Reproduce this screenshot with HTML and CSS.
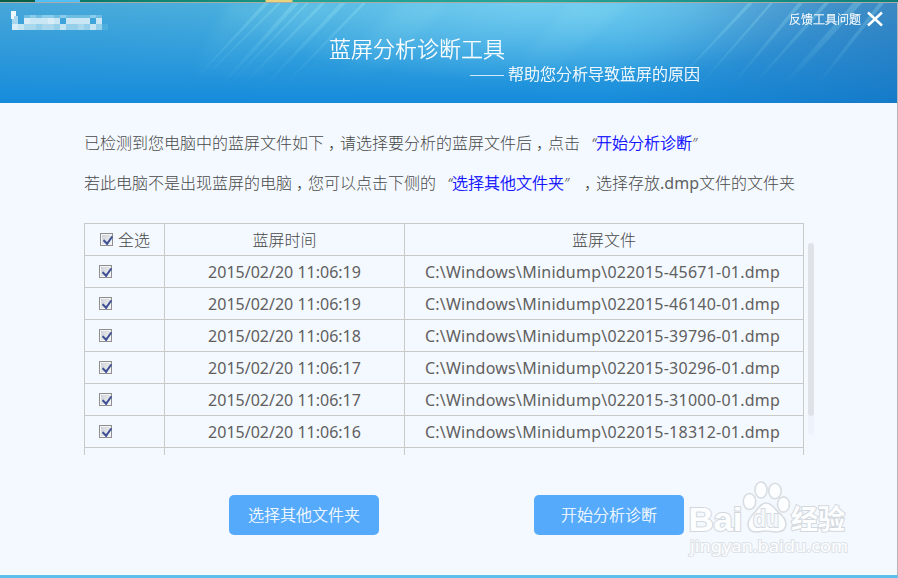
FILE: index.html
```html
<!DOCTYPE html>
<html lang="zh-CN">
<head>
<meta charset="utf-8">
<title>蓝屏分析诊断工具</title>
<link rel="stylesheet" href="styles.css">
</head>
<body>
<div class="desktop-strip"></div>
<div class="window">
  <header class="header">
    <svg class="rays" width="897" height="100" viewBox="0 0 897 100" aria-hidden="true">
      <defs>
        <linearGradient id="fade" x1="0" y1="0" x2="0" y2="1"><stop offset="0" stop-color="#bff" stop-opacity=".3"/><stop offset=".85" stop-color="#bff" stop-opacity="0"/></linearGradient>
        <filter id="soft"><feGaussianBlur stdDeviation="0.7"/></filter>
        <filter id="haze" x="-20%" width="140%"><feGaussianBlur stdDeviation="5"/></filter>
      </defs>
      <g fill="url(#fade)" filter="url(#soft)">
        <path d="M264 0h5L202 70h-2zM278 0h3L214 66h-2zM293 0h6L214 92h-3zM306 0h3L226 86h-2zM321 0h4L238 88h-2zM340 0h6L250 100h-3zM362 0h4L272 96h-2z" opacity=".7"/>
        <path d="M748 0h5L680 76h-2zM770 0h3L705 78h-3zM798 0h5L727 90h-3zM824 0h5L748 90h-3zM853 0h9L774 96h-5zM879 0h5L806 98h-3z" opacity=".75"/>
      </g>
      <g fill="url(#fade)" filter="url(#haze)">
        <path d="M230 0h110L250 90h-70zM400 0h50L350 96h-40zM570 0h60L520 96h-30z" opacity=".35"/>
      </g>
    </svg>
    <div class="topbar">
      <svg class="logo" width="100" height="22" viewBox="0 0 100 22" shape-rendering="crispEdges" aria-hidden="true">
        <path fill="#a9d8ee" d="M4 5h6v14H4z"/>
        <path fill="#eff8fc" d="M3 0h5v5H6v3H3z"/>
        <path fill="#d8edf7" d="M4 13h6v6H4z"/>
        <path fill="#6ebde3" d="M16 4h78v3H16z"/>
        <path fill="#8accea" d="M22 4h6v3h-6zM34 4h12v3H34zM52 4h6v3h-6zM82 4h6v3h-6z"/>
        <path fill="#c8e6f4" d="M16 7h36v6H16zM58 7h24v6H58zM88 7h6v6h-6z"/>
        <path fill="#d8edf7" d="M16 7h6v6h-6zM40 7h6v6h-6z"/>
        <path fill="#a9d8ee" d="M10 13h84v6H10z"/>
        <path fill="#96cfea" d="M28 13h6v6h-6zM46 13h6v6h-6zM58 13h12v6H58zM76 13h6v6h-6zM88 13h6v6h-6z"/>
        <path fill="#c4e5f3" d="M10 13h6v6h-6zM52 13h6v6h-6zM82 13h6v6h-6z"/>
        <path fill="#4eaedd" d="M94 13h6v6h-6z"/>
      </svg>
      <span class="feedback">反馈工具问题</span>
      <svg class="close" width="18" height="16" viewBox="0 0 18 16" aria-hidden="true"><path d="M2 1.5 16 14.5M16 1.5 2 14.5" stroke="#fff" stroke-width="2.5" fill="none"/></svg>
    </div>
    <h1 class="title">蓝屏分析诊断工具</h1>
    <p class="subtitle"><span class="dash">——</span>帮助您分析导致蓝屏的原因</p>
  </header>
  <main class="content">
    <p class="hint">已检测到您电脑中的蓝屏文件如下<span class="comma">，</span>请选择要分析的蓝屏文件后<span class="comma">，</span>点击<span class="quote open">“</span><b>开始分析诊断</b><span class="quote">”</span></p>
    <p class="hint">若此电脑不是出现蓝屏的电脑<span class="comma">，</span>您可以点击下侧的<span class="quote open">“</span><b>选择其他文件夹</b><span class="quote">”</span><span class="comma">，</span>选择存放<span class="latin">.dmp</span>文件的文件夹</p>
    <div class="list">
      <div class="viewport">
        <table class="files">
          <colgroup><col class="c1"><col class="c2"><col class="c3"></colgroup>
          <tr><td class="pick all"><div><i class="check"></i>全选</div></td><td>蓝屏时间</td><td>蓝屏文件</td></tr>
          <tr><td class="pick"><div><i class="check"></i></div></td><td>2015/02/20 11:06:19</td><td class="path">C:\Windows\Minidump\022015-45671-01.dmp</td></tr>
          <tr><td class="pick"><div><i class="check"></i></div></td><td>2015/02/20 11:06:19</td><td class="path">C:\Windows\Minidump\022015-46140-01.dmp</td></tr>
          <tr><td class="pick"><div><i class="check"></i></div></td><td>2015/02/20 11:06:18</td><td class="path">C:\Windows\Minidump\022015-39796-01.dmp</td></tr>
          <tr><td class="pick"><div><i class="check"></i></div></td><td>2015/02/20 11:06:17</td><td class="path">C:\Windows\Minidump\022015-30296-01.dmp</td></tr>
          <tr><td class="pick"><div><i class="check"></i></div></td><td>2015/02/20 11:06:17</td><td class="path">C:\Windows\Minidump\022015-31000-01.dmp</td></tr>
          <tr><td class="pick"><div><i class="check"></i></div></td><td>2015/02/20 11:06:16</td><td class="path">C:\Windows\Minidump\022015-18312-01.dmp</td></tr>
          <tr><td></td><td></td><td></td></tr>
        </table>
      </div>
      <div class="scrollbar"><div class="thumb"></div></div>
    </div>
    <div class="actions">
      <button class="btn">选择其他文件夹</button>
      <button class="btn">开始分析诊断</button>
    </div>
  </main>
  <svg class="watermark" width="170" height="84" viewBox="0 0 170 84">
    <g fill="#fdfeff" stroke="#d8dde2" stroke-width="1.6">
      <ellipse cx="65.5" cy="24.5" rx="6.2" ry="8"/>
      <ellipse cx="77" cy="13" rx="6" ry="8"/>
      <ellipse cx="91" cy="14" rx="6.2" ry="7.8"/>
      <ellipse cx="99.5" cy="27.5" rx="6" ry="7.6"/>
      <path d="M82 26c6 0 8 5 12 9 4 3 8 7 8 12 0 6-5 8-10 8-4 0-6-1-10-1s-6 1-10 1c-5 0-8-3-8-8s4-9 7-12c4-4 5-9 11-9z"/>
    </g>
    <g class="wm-text">
      <text class="wm-bai" x="4.5" y="53.5" textLength="54" lengthAdjust="spacingAndGlyphs">Bai</text>
      <text class="wm-du" x="69" y="50" textLength="26" lengthAdjust="spacingAndGlyphs">du</text>
      <text class="wm-cn" x="107" y="52" textLength="54" lengthAdjust="spacingAndGlyphs">经验</text>
      <text class="wm-url" x="6" y="75" textLength="158" lengthAdjust="spacingAndGlyphs">jingyan.baidu.com</text>
    </g>
  </svg>
</div>
</body>
</html>
```
FILE: styles.css
```css
* { box-sizing: border-box; }
body {
  margin: 0;
  width: 898px;
  height: 578px;
  overflow: hidden;
  font: 300 16px/24px "Noto Sans CJK SC", sans-serif;
  color: #484848;
}
p, h1 { margin: 0; font-weight: 300; }
.desktop-strip {
  height: 2px;
  background: linear-gradient(90deg, #075f45 0 35px, #4fc0f7 35px 80px, #087a67 80px, #16957f 265px, #e9d47d 266px 292px, #20a393 293px, #24a596 550px, #0d7f78 898px);
}
.window {
  position: relative;
  display: flex;
  flex-direction: column;
  height: 576px;
  border-top: 1px solid #a9aaa9;
  border-right: 1px solid #b5b5b5;
  border-bottom: 3px solid #5bc0ee;
  background: #f4f9ff;
}
.header {
  position: relative;
  height: 100px;
  color: #fff;
  -webkit-text-stroke: .25px #fff;
  background:
    radial-gradient(ellipse 310px 80px at 530px 0, rgba(140,218,248,.6), rgba(110,208,245,0)),
    linear-gradient(180deg, rgba(25,140,219,0), #168bdb),
    linear-gradient(90deg, #47a7d9, #4db4df 350px, #50bbe5 620px, #4c9fd3 760px, #4796cc);
}
.header::before {
  content: "";
  position: absolute;
  inset: 0;
  background: linear-gradient(135deg, transparent 70%, rgba(15,85,160,.3) 100%);
}
.rays { position: absolute; left: 0; top: 0; }
.topbar {
  position: relative;
  display: flex;
  align-items: flex-start;
  height: 29px;
  padding: 8px 13px 0 8px;
}
.feedback { margin-left: auto; font-size: 12px; line-height: 16px; }
.close { margin: 0 0 0 5px; }
.title { position: relative; height: 31px; padding-left: 329px; font-size: 22px; line-height: 30px; }
.subtitle { position: relative; display: flex; padding-left: 469px; line-height: 20px; }
.dash { width: 39px; font-size: 17.3px; transform-origin: left; transform: scaleX(1.25); -webkit-text-stroke: 0; }
.content { flex: 1; padding: 19px 0 0 84px; }
.hint { height: 40px; line-height: 40px; white-space: nowrap; }
.hint b { font-weight: 300; color: #00f; -webkit-text-stroke: .25px #00f; }
.comma { display: inline-block; width: 16px; text-align: center; font-feature-settings: "halt"; }
.quote { display: inline-block; width: 16px; font-family: "Noto Sans", sans-serif; font-style: italic; font-size: 15px; }
.open { text-align: right; }
.latin { font-family: "Noto Sans", sans-serif; font-weight: 400; color: #606060; }
.list { display: flex; gap: 4px; }
.viewport { height: 232px; margin-top: 21px; overflow: hidden; }
.files {
  width: 720px;
  table-layout: fixed;
  border-collapse: collapse;
  font-family: "Noto Sans", "Noto Sans CJK SC", sans-serif;
  font-weight: 400;
  color: #606060;
}
.files tr:first-child { font-weight: 300; color: #484848; }
.c1 { width: 80px; }
.c2 { width: 240px; }
.files td {
  height: 32px;
  padding: 0;
  border: 1px solid #c9c9c9;
  text-align: center;
  line-height: 24px;
  white-space: nowrap;
}
.files .path { padding-right: 3px; letter-spacing: .235px; }
.pick div { display: flex; align-items: center; padding-left: 14px; }
.pick.all div { gap: 5px; padding-left: 15px; }
.check {
  display: block;
  width: 13px;
  height: 13px;
  border: 1px solid #8e8f8f;
  background: linear-gradient(135deg, #cbcfd5, #f6f6f6);
  box-shadow: inset 0 0 0 1px #f4f4f4;
}
.check::after {
  content: "";
  display: block;
  width: 4px;
  height: 8px;
  margin: 0 0 0 4px;
  border: solid #3f5195;
  border-width: 0 2px 2px 0;
  transform: rotate(36deg) skewY(8deg);
}
.scrollbar { width: 6px; height: 192px; margin-top: 41px; border-radius: 3px; background: #eef3fb; }
.thumb { height: 173px; border-radius: 3px; background: #dfe3e8; }
.actions { display: flex; gap: 155px; padding: 40px 0 0 145px; }
.btn {
  width: 150px;
  height: 40px;
  padding: 0 0 2px;
  border: 0;
  border-radius: 5px;
  background: #56aafc;
  color: #fff;
  font: inherit;
  -webkit-text-stroke: .2px #fff;
}
.watermark { position: absolute; left: 684px; top: 474px; }
.wm-text { fill: #fdfeff; stroke: #d3d8dd; stroke-width: 2px; paint-order: stroke; font-family: "Liberation Sans", sans-serif; font-weight: 700; }
.wm-bai { font-size: 33px; }
.wm-du { font-size: 24px; fill: #f4f8fd; }
.wm-cn { font-family: "Noto Sans CJK SC", sans-serif; font-size: 27px; }
.wm-url { font-family: "Noto Sans", sans-serif; font-weight: 400; font-size: 17px; stroke: #dde2e7; }
```
